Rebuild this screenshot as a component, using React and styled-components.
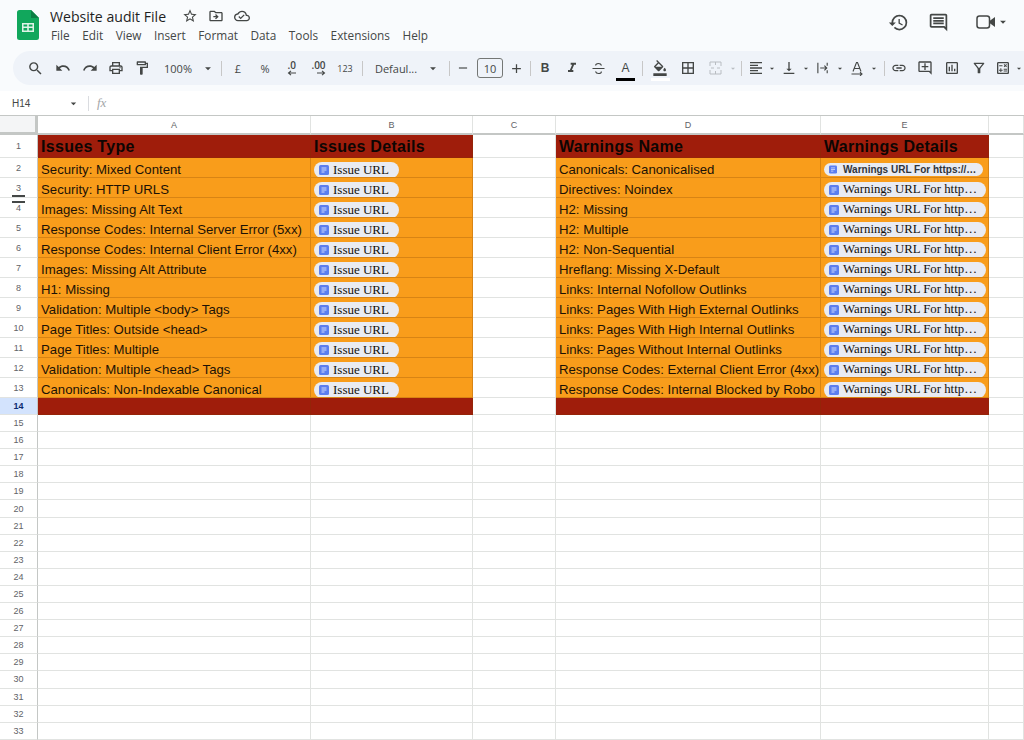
import styled, { createGlobalStyle } from 'styled-components'
import {
  MdSearch, MdUndo, MdRedo, MdOutlineLocalPrintshop, MdOutlineFormatPaint, MdFormatItalic,
  MdFormatColorFill, MdBorderAll, MdFormatAlignLeft, MdVerticalAlignBottom,
  MdLink, MdOutlineAddComment, MdOutlineInsertChart, MdOutlineFilterAlt, MdArrowDropDown, MdHistory,
  MdOutlineComment, MdStarBorder, MdOutlineDriveFileMove, MdOutlineCloudDone,
  MdOutlineCalculate, MdAdd, MdRemove,
} from 'react-icons/md'

const GlobalStyle = createGlobalStyle`
  html, body { margin: 0; padding: 0; background: #fff; overflow: hidden; }
  body { font-family: "Liberation Sans", Arial, sans-serif; }
`

const Page = styled.div`
  width: 1024px;
  height: 740px;
  overflow: hidden;
  position: relative;
`

const Header = styled.header`
  height: 91px;
  background: #f9fbfd;
  display: flex;
  flex-direction: column;
`

const TopBar = styled.div`
  height: 51px;
  display: flex;
  padding-left: 17px;
`

const Logo = styled.svg`
  width: 22px;
  height: 30px;
  margin-top: 10px;
  margin-right: 11px;
`

const TitleBlock = styled.div`
  display: flex;
  flex-direction: column;
  flex: 1;
`

const TitleRow = styled.div`
  display: flex;
  align-items: center;
  height: 22px;
  margin-top: 5px;
  color: #444746;
`

const Title = styled.span`
  font-family: "Open Sans", sans-serif;
  font-size: 14.1px;
  color: #1f1f1f;
  margin-right: 16px;
`

const TitleIcon = styled.span`
  display: flex;
  width: 26px;
  font-size: 16px;
`

const Menu = styled.nav`
  display: flex;
  gap: 12.5px;
  padding-left: 1px;
  font-family: "Open Sans", sans-serif;
  font-size: 11.8px;
  color: #444746;
`

const TopActions = styled.div`
  display: flex;
  align-items: center;
  height: 44px;
  color: #444746;
  padding-right: 14px;
`

const TopAction = styled.span`
  display: flex;
  align-items: center;
  justify-content: ${p => p.$align || 'center'};
  width: ${p => p.$w}px;
  font-size: ${p => p.$size || 21}px;
`

const Toolbar = styled.div`
  height: 34px;
  margin-left: 13px;
  padding-left: 9px;
  background: #eff3f9;
  border-radius: 17px 0 0 17px;
  display: flex;
  align-items: center;
  color: #444746;
  font-family: "Open Sans", sans-serif;
`

const Tool = styled.span`
  flex: none;
  display: flex;
  align-items: center;
  justify-content: center;
  height: 26px;
  width: ${p => p.$w}px;
  font-size: ${p => p.$size || 16}px;
  color: ${p => (p.$muted ? '#b9bdc2' : 'inherit')};
  position: relative;
`

const ToolText = styled(Tool)`
  font-size: ${p => p.$size || 11}px;
`

const Sep = styled.span`
  flex: none;
  width: 1px;
  height: 15px;
  background: #c7c7c7;
  margin-left: ${p => p.$l}px;
  margin-right: ${p => p.$r}px;
`

const SizeBox = styled.span`
  flex: none;
  width: 26px;
  height: 20px;
  margin-left: 4px;
  border: 1px solid #747775;
  border-radius: 3px;
  box-sizing: border-box;
  font-size: 11px;
  display: flex;
  align-items: center;
  justify-content: center;
`

const ColorBar = styled.i`
  position: absolute;
  left: calc(50% - 9.5px);
  bottom: 0;
  width: 19px;
  height: 3px;
  background: ${p => p.$color};
`

const LetterIcon = styled.b`
  font-family: "Liberation Sans", sans-serif;
  font-size: ${p => p.$size || 12}px;
  font-weight: ${p => p.$weight || 400};
  line-height: 1;
`

const DecimalIcon = styled.span`
  display: flex;
  flex-direction: column;
  align-items: flex-end;
  font-size: 10px;
  font-weight: 600;
  line-height: 10px;
  margin-top: -1px;
`

const FormulaBar = styled.div`
  height: 24px;
  background: #fff;
  display: flex;
  align-items: center;
  font-size: 10px;
  color: #1f1f1f;
  padding-left: 12px;
`

const CellName = styled.span`
  display: flex;
  align-items: center;
  justify-content: space-between;
  width: 68px;
  color: #444746;
`

const FormulaSep = styled.span`
  width: 1px;
  height: 15px;
  background: #dadce0;
  margin: 0 8px 0 8px;
`

const Fx = styled.span`
  font-family: "Liberation Serif", serif;
  font-style: italic;
  font-size: 13px;
  color: #a3a6a8;
`

const Sheet = styled.div`
  border-top: 1px solid #c4c7c5;
  position: relative;
`

const Row = styled.div`
  display: grid;
  grid-template-columns: 38px 273px 162px 83px 265px 168px 35px;
  height: ${p => p.$h}px;
  box-sizing: border-box;
`

const RowHead = styled.div`
  display: flex;
  align-items: center;
  justify-content: center;
  box-sizing: border-box;
  font-size: 9px;
  border-right: 1px solid #c4c7c5;
  border-bottom: 1px solid #e1e3e1;
  background: ${p => (p.$active ? '#d3e3fd' : '#fff')};
  color: ${p => (p.$active ? '#0b2a70' : '#5f6368')};
  font-weight: ${p => (p.$active ? 700 : 400)};
`

const Corner = styled.div`
  background: #f4f5f6;
  box-sizing: border-box;
  border-right: 3px solid #c4c7c5;
  border-bottom: 3px solid #c4c7c5;
`

const ColHead = styled.div`
  display: flex;
  align-items: center;
  justify-content: center;
  box-sizing: border-box;
  font-size: 9px;
  color: #5f6368;
  border-right: 1px solid #e1e3e1;
  border-bottom: 2px solid #c4c7c5;
`

const Cell = styled.div`
  box-sizing: border-box;
  display: flex;
  align-items: center;
  overflow: hidden;
  white-space: nowrap;
  padding: 2px 0 0 3px;
  font-size: 13.2px;
  color: #1c1206;
  background: ${p => p.$bg || '#fff'};
  border-right: 1px solid ${p => (p.$bg ? 'rgba(120, 60, 0, 0.25)' : '#e1e3e1')};
  border-bottom: 1px solid ${p => (p.$bg ? 'rgba(120, 60, 0, 0.25)' : '#e1e3e1')};
`

const DataCell = styled(Cell)`
  padding-top: 4px;
`

const HeadCell = styled(Cell)`
  font-size: 16px;
  font-weight: 700;
  letter-spacing: 0.3px;
  color: #0d0603;
`

const Chip = styled.span`
  display: flex;
  align-items: center;
  box-sizing: border-box;
  flex: none;
  height: ${p => (p.$small ? 13 : 16)}px;
  width: ${p => p.$w}px;
  padding-left: 5px;
  border-radius: 8px;
  background: #e9ebf2;
  color: #15110c;
`

const ChipIcon = styled.svg`
  flex: none;
  width: ${p => (p.$small ? 8 : 10)}px;
  height: ${p => (p.$small ? 9 : 10)}px;
  margin-right: ${p => (p.$small ? 6 : 4)}px;
`

const ChipLabel = styled.span`
  font-family: ${p => (p.$small ? '"Liberation Sans", sans-serif' : '"Liberation Serif", serif')};
  font-size: ${p => p.$size}px;
  font-weight: ${p => (p.$small ? 700 : 400)};
  color: ${p => (p.$small ? '#30343b' : '#15110c')};
  white-space: nowrap;
`

const ResizeHandle = styled.div`
  position: absolute;
  left: 12px;
  top: 79px;
  width: 13px;
  height: 8px;
  border-top: 2px solid #444746;
  border-bottom: 2px solid #444746;
  box-sizing: border-box;
`

const ORANGE = '#f99d1b'
const RED = '#9f1d0b'

const issues = [
  'Security: Mixed Content', 'Security: HTTP URLS', 'Images: Missing Alt Text',
  'Response Codes: Internal Server Error (5xx)', 'Response Codes: Internal Client Error (4xx)',
  'Images: Missing Alt Attribute', 'H1: Missing', 'Validation: Multiple <body> Tags',
  'Page Titles: Outside <head>', 'Page Titles: Multiple', 'Validation: Multiple <head> Tags',
  'Canonicals: Non-Indexable Canonical',
]

const warnings = [
  'Canonicals: Canonicalised', 'Directives: Noindex', 'H2: Missing', 'H2: Multiple', 'H2: Non-Sequential',
  'Hreflang: Missing X-Default', 'Links: Internal Nofollow Outlinks', 'Links: Pages With High External Outlinks',
  'Links: Pages With High Internal Outlinks', 'Links: Pages Without Internal Outlinks',
  'Response Codes: External Client Error (4xx)', 'Response Codes: Internal Blocked by Robo',
]

const columns = ['A', 'B', 'C', 'D', 'E', '']

function UrlChip({ label, w, small, size }) {
  return (
    <Chip $w={w} $small={small}>
      <ChipIcon $small={small} viewBox="0 0 10 10">
        <rect width="10" height="10" rx="1.5" fill="#5b7ef0" />
        <path d="M2.5 3h5M2.5 5h5M2.5 7h3" stroke="#dfe6fb" strokeWidth="0.9" />
      </ChipIcon>
      <ChipLabel $small={small} $size={size}>{label}</ChipLabel>
    </Chip>
  )
}

function DataRow({ n, issue, warning }) {
  const first = n === 2
  return (
    <Row $h={20}>
      <RowHead>{n}</RowHead>
      <DataCell $bg={ORANGE}>{issue}</DataCell>
      <DataCell $bg={ORANGE}><UrlChip label="Issue URL" w={85} size={13} /></DataCell>
      <Cell />
      <DataCell $bg={ORANGE}>{warning}</DataCell>
      <DataCell $bg={ORANGE}>
        {first
          ? <UrlChip small w={159} size={10} label="Warnings URL For https://…" />
          : <UrlChip w={162} size={12.8} label="Warnings URL For http…" />}
      </DataCell>
      <Cell />
    </Row>
  )
}

function Caret({ w = 10, muted }) {
  return <Tool $w={w} $size={15} $muted={muted}><MdArrowDropDown /></Tool>
}

function App() {
  const emptyRows = Array.from({ length: 19 }, (_, i) => i + 15)
  return (
    <Page>
      <GlobalStyle />
      <Header>
        <TopBar>
          <Logo viewBox="0 0 22 30">
            <path d="M2.5 0H14l8 8v19.5a2.5 2.5 0 0 1-2.5 2.5h-17A2.5 2.5 0 0 1 0 27.5v-25A2.5 2.5 0 0 1 2.5 0z" fill="#11a75c" />
            <path d="M14 0v8h8z" fill="#0c7f45" />
            <path d="M5 13h12v9H5zM6.5 14.5v2h3.7v-2zm5.3 0v2h3.7v-2zm-5.3 3.6v2.4h3.7v-2.4zm5.3 0v2.4h3.7v-2.4z" fill="#dff3e7" fillRule="evenodd" />
          </Logo>
          <TitleBlock>
            <TitleRow>
              <Title>Website audit File</Title>
              <TitleIcon><MdStarBorder /></TitleIcon>
              <TitleIcon><MdOutlineDriveFileMove /></TitleIcon>
              <TitleIcon><MdOutlineCloudDone /></TitleIcon>
            </TitleRow>
            <Menu>
              {['File', 'Edit', 'View', 'Insert', 'Format', 'Data', 'Tools', 'Extensions', 'Help'].map(m => (
                <span key={m}>{m}</span>
              ))}
            </Menu>
          </TitleBlock>
          <TopActions>
            <TopAction $w={40}><MdHistory /></TopAction>
            <TopAction $w={40}><MdOutlineComment /></TopAction>
            <TopAction $w={38} $align="flex-end">
              <svg width="20" height="16" viewBox="0 0 20 16">
                <rect x="1" y="2" width="12.5" height="12" rx="2.5" fill="none" stroke="currentColor" strokeWidth="1.5" />
                <path d="M13.5 7 19 3v10l-5.5-4z" fill="currentColor" />
              </svg>
            </TopAction>
            <TopAction $w={14} $size={14} $align="flex-start"><MdArrowDropDown /></TopAction>
          </TopActions>
        </TopBar>
        <Toolbar>
          <Tool $w={27} $size={17}><MdSearch /></Tool>
          <Tool $w={28}><MdUndo /></Tool>
          <Tool $w={25}><MdRedo /></Tool>
          <Tool $w={27}><MdOutlineLocalPrintshop /></Tool>
          <Tool $w={26}><MdOutlineFormatPaint /></Tool>
          <ToolText $w={46}>100%</ToolText>
          <Caret w={14} />
          <Sep $l={6} $r={2} />
          <ToolText $w={28}>£</ToolText>
          <ToolText $w={26}>%</ToolText>
          <Tool $w={27}>
            <DecimalIcon>.0
              <svg width="9" height="6" viewBox="0 0 9 6" fill="none" stroke="currentColor" strokeWidth="1.1"><path d="M9 3H1.5M4 .8 1.5 3 4 5.2" /></svg>
            </DecimalIcon>
          </Tool>
          <Tool $w={27}>
            <DecimalIcon>.00
              <svg width="9" height="6" viewBox="0 0 9 6" fill="none" stroke="currentColor" strokeWidth="1.1"><path d="M0 3h7.5M5 .8 7.5 3 5 5.2" /></svg>
            </DecimalIcon>
          </Tool>
          <ToolText $w={26} $size={9}>123</ToolText>
          <Sep $l={4} $r={3} />
          <ToolText $w={60}>Defaul...</ToolText>
          <Caret w={14} />
          <Sep $l={9} $r={3} />
          <Tool $w={20} $size={14}><MdRemove /></Tool>
          <SizeBox>10</SizeBox>
          <Tool $w={26} $size={15}><MdAdd /></Tool>
          <Sep $l={1} $r={1} />
          <Tool $w={26}><LetterIcon $size={12} $weight={700}>B</LetterIcon></Tool>
          <Tool $w={27}><MdFormatItalic /></Tool>
          <Tool $w={27}>
            <svg width="15" height="15" viewBox="0 0 15 15" fill="none" stroke="currentColor" strokeWidth="1.1">
              <path d="M1.5 7.5h12M10.5 4.5C10 3 9 2.5 7.5 2.5S4.6 3.2 4.6 4.6M4.5 10.5c.5 1.5 1.5 2 3 2s2.9-.7 2.9-2.1" />
            </svg>
          </Tool>
          <Tool $w={27}>
            <LetterIcon $size={12}>A</LetterIcon>
            <ColorBar $color="#000" />
          </Tool>
          <Sep $l={3} $r={3} />
          <Tool $w={28}>
            <MdFormatColorFill />
            <ColorBar $color="#fff" />
          </Tool>
          <Tool $w={28}><MdBorderAll /></Tool>
          <Tool $w={26} $muted>
            <svg width="13" height="14" viewBox="0 0 13 14" fill="none" stroke="currentColor" strokeWidth="1">
              <path d="M1 5V1h11v4M1 9v4h11V9M6.5 1v3M6.5 10v3M2 7h3M11 7H8" />
            </svg>
          </Tool>
          <Caret muted />
          <Sep $l={3} $r={3} />
          <Tool $w={22}><MdFormatAlignLeft /></Tool>
          <Caret />
          <Tool $w={24}><MdVerticalAlignBottom /></Tool>
          <Caret />
          <Tool $w={24}>
            <svg width="14" height="14" viewBox="0 0 15 15" fill="none" stroke="currentColor" strokeWidth="1.2">
              <path d="M2 2v11M12 2v3M12 10v3M4.5 7.5h7M9 5l2.5 2.5L9 10" />
            </svg>
          </Tool>
          <Caret />
          <Tool $w={24}>
            <svg width="14" height="15" viewBox="0 0 14 15" fill="none" stroke="currentColor" strokeWidth="1.1">
              <path d="M3 10.5 6.5 1.5h1L11 10.5M4.3 7.5h5.4M1.5 13h10M10 11.2l2 1.8-2 1.8" />
            </svg>
          </Tool>
          <Caret />
          <Sep $l={5} $r={1} />
          <Tool $w={26}><MdLink /></Tool>
          <Tool $w={26}><MdOutlineAddComment /></Tool>
          <Tool $w={27}><MdOutlineInsertChart /></Tool>
          <Tool $w={27}><MdOutlineFilterAlt /></Tool>
          <Tool $w={22}><MdOutlineCalculate /></Tool>
          <Caret />
        </Toolbar>
      </Header>
      <FormulaBar>
        <CellName>H14<MdArrowDropDown size={13} /></CellName>
        <FormulaSep />
        <Fx>fx</Fx>
      </FormulaBar>
      <Sheet>
        <Row $h={19}>
          <Corner />
          {columns.map((c, i) => <ColHead key={i}>{c}</ColHead>)}
        </Row>
        <Row $h={23}>
          <RowHead>1</RowHead>
          <HeadCell $bg={RED}>Issues Type</HeadCell>
          <HeadCell $bg={RED}>Issues Details</HeadCell>
          <Cell />
          <HeadCell $bg={RED}>Warnings Name</HeadCell>
          <HeadCell $bg={RED}>Warnings Details</HeadCell>
          <Cell />
        </Row>
        {issues.map((issue, i) => (
          <DataRow key={issue} n={i + 2} issue={issue} warning={warnings[i]} />
        ))}
        <Row $h={17}>
          <RowHead $active>14</RowHead>
          <Cell $bg={RED} />
          <Cell $bg={RED} />
          <Cell />
          <Cell $bg={RED} />
          <Cell $bg={RED} />
          <Cell />
        </Row>
        {emptyRows.map(n => (
          <Row key={n} $h={17.1}>
            <RowHead>{n}</RowHead>
            <Cell /><Cell /><Cell /><Cell /><Cell /><Cell />
          </Row>
        ))}
        <ResizeHandle />
      </Sheet>
    </Page>
  )
}

export default App
